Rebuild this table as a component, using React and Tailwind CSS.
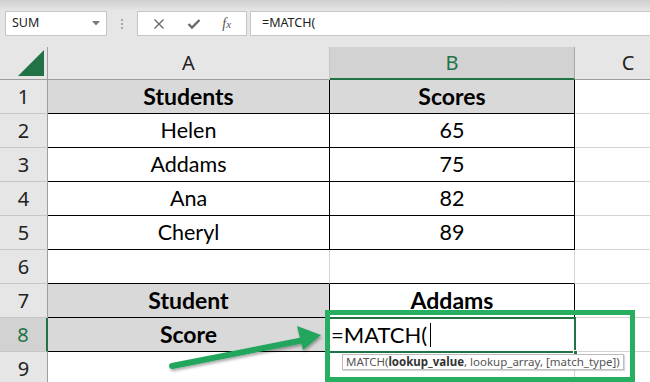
import React from "react";

const cellFont = { fontFamily: "Lato, 'Open Sans', sans-serif" };

function RowHead({ n, active }) {
  return (
    <div
      className={
        "flex items-center justify-center text-[20px] border-b border-[#c6c6c6] " +
        (active
          ? "bg-[#d2d2d2] text-[#217346] border-r-2 border-r-[#217346]"
          : "bg-[#e6e6e6] text-[#222] border-r border-r-[#9e9e9e]")
      }
      style={{ fontFamily: "'Noto Sans', 'Open Sans', sans-serif" }}
    >
      {n}
    </div>
  );
}

function Cell({ children, bold, shade, r = "black", b = "black", className = "" }) {
  const rc = r === "black" ? "border-r-black" : "border-r-[#d4d4d4]";
  const bc = b === "black" ? "border-b-black" : "border-b-[#d4d4d4]";
  return (
    <div
      className={
        "flex items-center justify-center text-black border-r border-b " +
        rc + " " + bc + " " +
        (shade ? "bg-[#d9d9d9] " : "bg-white ") +
        (bold ? "font-bold text-[23px] " : "text-[21.5px] ") +
        className
      }
      style={cellFont}
    >
      {children}
    </div>
  );
}

export default function App() {
  const rows = [
    ["Students", "Scores", true],
    ["Helen", "65"],
    ["Addams", "75"],
    ["Ana", "82"],
    ["Cheryl", "89"],
  ];

  return (
    <div className="relative w-[650px] h-[382px] overflow-hidden bg-[#e6e6e6]">
      {/* ribbon edge */}
      <div className="h-[11px] bg-gradient-to-b from-[#d0d0d0] to-[#e6e6e6]" />

      {/* formula bar */}
      <div
        className="flex items-center h-[25px] text-[12.5px] text-[#222]"
        style={{ fontFamily: "'Noto Sans', 'Open Sans', sans-serif" }}
      >
        <div className="ml-[5px] w-[102px] h-full bg-white border border-[#c6c6c6] flex items-center justify-between pl-[6px] pr-[6px]">
          <span>SUM</span>
          <svg width="8" height="5" viewBox="0 0 8 5">
            <path d="M0 0 H8 L4 4.5 Z" fill="#7a7a7a" />
          </svg>
        </div>
        <div className="w-[30px] flex flex-col items-center gap-[2px]">
          <span className="w-[2px] h-[2px] bg-[#a8a8a8]" />
          <span className="w-[2px] h-[2px] bg-[#a8a8a8]" />
          <span className="w-[2px] h-[2px] bg-[#a8a8a8]" />
        </div>
        <div className="w-[110px] h-full bg-white border border-[#c6c6c6] flex items-center justify-around px-[4px]">
          <svg width="12" height="12" viewBox="0 0 12 12">
            <path d="M1.5 1.5 L10.5 10.5 M10.5 1.5 L1.5 10.5" stroke="#6a6a6a" strokeWidth="1.4" />
          </svg>
          <svg width="14" height="12" viewBox="0 0 14 12">
            <path d="M1.5 6 L5 9.5 L12.5 2" stroke="#6a6a6a" strokeWidth="2.4" fill="none" />
          </svg>
          <span
            className="italic text-[14px] text-[#555]"
            style={{ fontFamily: "'Liberation Serif', serif" }}
          >
            f<span className="text-[11px]">x</span>
          </span>
        </div>
        <div className="ml-[3px] flex-1 h-full bg-white border border-r-0 border-[#c6c6c6] flex items-center pl-[11px]">
          =MATCH(
        </div>
      </div>

      <div className="h-[11px]" />

      {/* sheet */}
      <div className="grid w-[682px] grid-cols-[48px_282px_245px_107px] grid-rows-[33px_repeat(9,34px)]">
        {/* column headers */}
        <div className="bg-[#e6e6e6] border-r border-b border-[#9e9e9e] flex items-end justify-end pr-[3px] pb-[3px]">
          <svg width="26" height="26" viewBox="0 0 26 26">
            <path d="M26 0 V26 H0 Z" fill="#217346" />
          </svg>
        </div>
        {["A", "B", "C"].map((c) => (
          <div
            key={c}
            className={
              "flex items-center justify-center text-[20px] " +
              (c === "B"
                ? "bg-[#d2d2d2] text-[#217346] border-r border-r-[#a8a8a8] border-b-2 border-b-[#217346]"
                : "bg-[#e6e6e6] text-[#222] border-r border-r-[#c6c6c6] border-b border-b-[#9e9e9e]")
            }
            style={{ fontFamily: "'Noto Sans', 'Open Sans', sans-serif" }}
          >
            {c}
          </div>
        ))}

        {/* rows 1-5 */}
        {rows.map(([a, b, head], i) => (
          <React.Fragment key={i}>
            <RowHead n={i + 1} />
            <Cell bold={head} shade={head}>{a}</Cell>
            <Cell bold={head} shade={head}>{b}</Cell>
            <Cell r="grid" b="grid" />
          </React.Fragment>
        ))}

        {/* row 6 */}
        <RowHead n={6} />
        <Cell r="grid" />
        <Cell r="grid" />
        <Cell r="grid" b="grid" />

        {/* row 7 */}
        <RowHead n={7} />
        <Cell bold shade>Student</Cell>
        <Cell bold>Addams</Cell>
        <Cell r="grid" b="grid" />

        {/* row 8 */}
        <RowHead n={8} active />
        <Cell bold shade>Score</Cell>
        <Cell className="justify-start pl-[1px] !text-[22px]">
          <span>=MATCH(</span>
          <span className="ml-[3px] w-[1px] h-[24px] bg-black" />
        </Cell>
        <Cell r="grid" b="grid" />

        {/* row 9 */}
        <RowHead n={9} />
        <Cell r="grid" b="grid" />
        <Cell r="grid" b="grid" />
        <Cell r="grid" b="grid" />
      </div>

      {/* active cell outline with fill handle */}
      <div className="absolute left-[328px] top-[317px] w-[248px] h-[36px] border-2 border-[#217346]">
        <div className="absolute -right-[4px] -bottom-[4px] w-[5px] h-[5px] bg-[#217346] border border-white" />
      </div>

      {/* function argument tip */}
      <div
        className="absolute left-[342px] top-[354px] h-[16px] px-[3px] bg-white border border-[#bcbcbc] shadow-[1px_1px_1px_rgba(0,0,0,0.15)] flex items-center text-[11.5px] text-[#555] whitespace-nowrap"
        style={{ fontFamily: "'Noto Sans', 'Open Sans', sans-serif" }}
      >
        MATCH(<b className="text-[#333]">lookup_value</b>, lookup_array, [match_type])
      </div>

      {/* highlight frame */}
      <div className="absolute left-[325px] top-[310px] w-[310px] h-[72px] border-[5px] border-[#27ae60]" />

      {/* pointer arrow */}
      <svg className="absolute left-0 top-0 pointer-events-none" width="650" height="382">
        <defs>
          <filter id="sh" x="-10%" y="-50%" width="130%" height="200%">
            <feDropShadow dx="1" dy="2" stdDeviation="1.5" floodColor="#000" floodOpacity="0.35" />
          </filter>
        </defs>
        <g filter="url(#sh)">
          <line x1="172" y1="366" x2="304" y2="340" stroke="#22a55b" strokeWidth="6" strokeLinecap="round" />
          <path d="M321 335 L297 326 L303 350 Z" fill="#22a55b" />
        </g>
      </svg>
    </div>
  );
}
